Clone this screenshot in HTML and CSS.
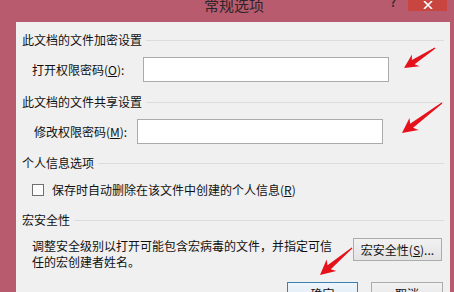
FILE: index.html
```html
<!DOCTYPE html>
<html lang="zh">
<head>
<meta charset="utf-8">
<link rel="stylesheet" href="styles.css">
</head>
<body>
<div class="window">
  <div class="titlebar">
    <span class="title">常规选项</span>
    <span class="help">?</span>
    <span class="close"><svg width="10" height="8" viewBox="0 0 10 8"><path d="M1 0 L9 8 M9 0 L1 8" stroke="#fff" stroke-width="1.6"/></svg></span>
  </div>
  <div class="main">
    <div class="panel">
      <div class="heading">此文档的文件加密设置</div>
      <div class="field field-open">
        <span class="label">打开权限密码(<u>O</u>):</span>
        <span class="input"></span>
      </div>
      <div class="heading heading-gap">此文档的文件共享设置</div>
      <div class="field field-modify">
        <span class="label">修改权限密码(<u>M</u>):</span>
        <span class="input"></span>
      </div>
      <div class="heading heading-gap2">个人信息选项</div>
      <div class="check-row">
        <span class="checkbox"></span>
        <span>保存时自动删除在该文件中创建的个人信息(<u>R</u>)</span>
      </div>
      <div class="heading heading-gap3">宏安全性</div>
      <div class="macro-row">
        <p class="macro-text">调整安全级别以打开可能包含宏病毒的文件，并指定可信任的宏创建者姓名。</p>
        <span class="btn btn-macro">宏安全性(<u>S</u>)...</span>
      </div>
      <div class="actions">
        <span class="btn btn-ok">确定</span>
        <span class="btn btn-cancel">取消</span>
      </div>
    </div>
  </div>
  <svg class="arrows" width="454" height="292" viewBox="0 0 454 292">
    <g transform="translate(404 68) rotate(147.2)">
      <polygon points="0,0 -14,-7 -11,-2.5 -37,-0.6 -37,0.6 -11,2.5 -14,7" fill="#e5121b"/>
    </g>
    <g transform="translate(402 133) rotate(143.1)">
      <polygon points="0,0 -15,-7.5 -12,-2.5 -50,-0.6 -50,0.6 -12,2.5 -15,7.5" fill="#e5121b"/>
    </g>
    <g transform="translate(320 275) rotate(139.8)">
      <polygon points="0,0 -15,-7.5 -12,-2.5 -42,-0.6 -42,0.6 -12,2.5 -15,7.5" fill="#e5121b"/>
    </g>
  </svg>
</div>
</body>
</html>
```

FILE: styles.css
```css
* { box-sizing: border-box; }
html, body { margin: 0; padding: 0; }
body {
  width: 454px;
  height: 292px;
  overflow: hidden;
  font-family: "Noto Sans CJK SC", "Noto Sans", sans-serif;
  font-size: 12px;
  color: #111;
}
.window {
  position: relative;
  width: 454px;
  height: 292px;
  background: #b95b6e;
  display: flex;
  flex-direction: column;
  overflow: hidden;
}
.titlebar {
  height: 22px;
  flex: none;
  display: flex;
  align-items: flex-start;
  padding-left: 204px;
}
.title {
  font-size: 15px;
  line-height: 14px;
  margin-top: -2px;
  color: #2e2528;
  width: 60px;
}
.help {
  margin-left: 126px;
  width: 8px;
  font-size: 12px;
  font-weight: bold;
  line-height: 10px;
  margin-top: -3px;
  color: #3a2a30;
}
.close {
  margin-left: 10px;
  width: 39px;
  height: 11px;
  background: #c8463f;
  display: flex;
  justify-content: center;
  align-items: flex-start;
  padding-top: 1px;
}
.main {
  flex: 1;
  display: flex;
  padding: 0 4px 0 16px;
}
.panel {
  flex: 1;
  background: #f0f0f0;
  padding: 10px 6px 0 6px;
  line-height: 16px;
}
.heading {
  display: flex;
  align-items: center;
  gap: 4px;
  height: 16px;
}
.heading::after {
  content: "";
  flex: 1;
  height: 1px;
  background: #dcdcdc;
}
.heading-gap { margin-top: 12px; }
.heading-gap2 { margin-top: 11px; }
.heading-gap3 { margin-top: 14px; }
.field {
  display: flex;
  align-items: center;
  margin-top: 9px;
}
.field-open { padding-left: 10px; }
.field-open .label { width: 111px; }
.field-modify { padding-left: 12px; }
.field-modify .label { width: 103px; }
.input {
  width: 246px;
  height: 25px;
  background: #fff;
  border: 1px solid #ababab;
}
.check-row {
  display: flex;
  align-items: center;
  gap: 8px;
  margin-top: 11px;
  padding-left: 10px;
  height: 16px;
}
.checkbox {
  width: 12px;
  height: 12px;
  border: 1px solid #6f6f6f;
  background: #fbfbfb;
}
.macro-row {
  display: flex;
  align-items: flex-start;
  margin-top: 10px;
}
.macro-text {
  margin: 0;
  padding-left: 10px;
  width: 315px;
  line-height: 16px;
}
.btn {
  display: flex;
  align-items: center;
  justify-content: center;
  height: 23px;
  border: 1px solid #acacac;
  background: linear-gradient(#f2f2f2, #e3e3e3);
}
.btn-macro {
  margin-left: 16px;
  width: 89px;
}
.actions {
  display: flex;
  justify-content: flex-end;
  gap: 13px;
  margin-top: 12px;
  padding-right: 1px;
}
.btn-ok {
  width: 71px;
  border-color: #3c7fb1;
  background: linear-gradient(#eef5fb, #dde9f3);
}
.btn-cancel { width: 72px; }
.arrows {
  position: absolute;
  left: 0;
  top: 0;
  pointer-events: none;
}
```
